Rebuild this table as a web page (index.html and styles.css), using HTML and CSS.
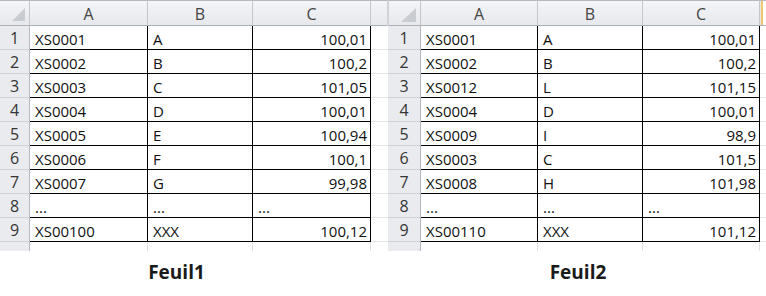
FILE: index.html
```html
<!DOCTYPE html>
<html lang="fr">
<head>
<meta charset="utf-8">
<title>Feuil1 / Feuil2</title>
<link rel="stylesheet" href="styles.css">
</head>
<body>
<div class="page">
  <div class="sheets">
    <div class="sheet sheet-left">
      <div class="corner"><svg class="tri" width="13" height="13" viewBox="0 0 13 13"><polygon points="13,0 13,13 0,13" fill="#c9ccd1"/></svg></div>
      <div class="colhdr">A</div><div class="colhdr">B</div><div class="colhdr">C</div><div class="colhdr hdr-part"></div>

      <div class="rowhdr">1</div><div class="cell">XS0001</div><div class="cell">A</div><div class="cell num">100,01</div><div class="blank"></div>
      <div class="rowhdr">2</div><div class="cell">XS0002</div><div class="cell">B</div><div class="cell num">100,2</div><div class="blank"></div>
      <div class="rowhdr">3</div><div class="cell">XS0003</div><div class="cell">C</div><div class="cell num">101,05</div><div class="blank"></div>
      <div class="rowhdr">4</div><div class="cell">XS0004</div><div class="cell">D</div><div class="cell num">100,01</div><div class="blank"></div>
      <div class="rowhdr">5</div><div class="cell">XS0005</div><div class="cell">E</div><div class="cell num">100,94</div><div class="blank"></div>
      <div class="rowhdr">6</div><div class="cell">XS0006</div><div class="cell">F</div><div class="cell num">100,1</div><div class="blank"></div>
      <div class="rowhdr">7</div><div class="cell">XS0007</div><div class="cell">G</div><div class="cell num">99,98</div><div class="blank"></div>
      <div class="rowhdr">8</div><div class="cell">...</div><div class="cell">...</div><div class="cell">...</div><div class="blank"></div>
      <div class="rowhdr">9</div><div class="cell">XS00100</div><div class="cell">XXX</div><div class="cell num">100,12</div><div class="blank"></div>

      <div class="rowhdr part"></div><div class="pcell"></div><div class="pcell"></div><div class="pcell"></div><div class="pblank"></div>
    </div>

    <div class="sheet sheet-right">
      <div class="corner corner-wide"><svg class="tri" width="15" height="14" viewBox="0 0 15 14"><polygon points="15,0 15,14 0,14" fill="#c9ccd1"/></svg></div>
      <div class="colhdr">A</div><div class="colhdr">B</div><div class="colhdr">C</div><div class="colhdr hdr-edge"></div>

      <div class="rowhdr">1</div><div class="cell">XS0001</div><div class="cell">A</div><div class="cell num">100,01</div><div class="blank"></div>
      <div class="rowhdr">2</div><div class="cell">XS0002</div><div class="cell">B</div><div class="cell num">100,2</div><div class="blank"></div>
      <div class="rowhdr">3</div><div class="cell">XS0012</div><div class="cell">L</div><div class="cell num">101,15</div><div class="blank"></div>
      <div class="rowhdr">4</div><div class="cell">XS0004</div><div class="cell">D</div><div class="cell num">100,01</div><div class="blank"></div>
      <div class="rowhdr">5</div><div class="cell">XS0009</div><div class="cell">I</div><div class="cell num">98,9</div><div class="blank"></div>
      <div class="rowhdr">6</div><div class="cell">XS0003</div><div class="cell">C</div><div class="cell num">101,5</div><div class="blank"></div>
      <div class="rowhdr">7</div><div class="cell">XS0008</div><div class="cell">H</div><div class="cell num">101,98</div><div class="blank"></div>
      <div class="rowhdr">8</div><div class="cell">...</div><div class="cell">...</div><div class="cell">...</div><div class="blank"></div>
      <div class="rowhdr">9</div><div class="cell">XS00110</div><div class="cell">XXX</div><div class="cell num">101,12</div><div class="blank"></div>

      <div class="rowhdr part"></div><div class="pcell"></div><div class="pcell"></div><div class="pcell"></div><div class="pblank"></div>
    </div>
  </div>

  <div class="captions">
    <div class="caption">Feuil1</div>
    <div class="caption">Feuil2</div>
  </div>
</div>
</body>
</html>
```

FILE: styles.css
```css
html, body {
  margin: 0;
  padding: 0;
  background: #ffffff;
}

body {
  width: 766px;
  height: 296px;
  overflow: hidden;
  font-family: "Open Sans", "Liberation Sans", sans-serif;
  font-size: 15px;
  color: #111111;
}

.page {
  display: flex;
  flex-direction: column;
}

.sheets {
  display: flex;
}

.sheet {
  display: grid;
  grid-template-rows: 26px repeat(9, 24px) 9px;
}

.sheet-left {
  grid-template-columns: 30px 118px 105px 118px 17px;
}

.sheet-right {
  grid-template-columns: 33px 117px 105px 117px 6px;
}

.sheet > div {
  box-sizing: border-box;
  overflow: hidden;
  white-space: nowrap;
}

/* headers */
.corner,
.colhdr {
  background: linear-gradient(#f4f5f7, #e6e8ec);
  border-top: 1px solid #b5b9bf;
  border-bottom: 1px solid #abb0b7;
  border-right: 1px solid #c3c7cd;
}

.corner {
  display: flex;
  align-items: flex-end;
  justify-content: flex-end;
  padding: 0 4px 4px 0;
}

.corner-wide {
  padding: 0 4px 3px 0;
  border-left: 1px solid #d0d3d8;
}

.tri {
  display: block;
}

.colhdr {
  display: flex;
  align-items: center;
  justify-content: center;
  color: #454545;
  font-size: 16px;
  line-height: 20px;
  padding-top: 1px;
}

.hdr-part {
  border-right: 1px solid #d0d3d8;
}

.hdr-edge {
  border-right: none;
  background: linear-gradient(90deg, #e6e8ec 0, #e6e8ec 1px, #f1c569 1px, #f1c569 3px, #ffffff 3px);
}

.rowhdr {
  background: #e9ebee;
  border-right: 1px solid #b4b9c0;
  border-bottom: 1px solid #cdd0d5;
  text-align: center;
  color: #353535;
  font-size: 16px;
  line-height: 20px;
  padding-top: 2px;
}

.rowhdr.part {
  border-bottom: none;
  padding-top: 0;
}

/* data cells */
.cell {
  border-right: 1px solid #000000;
  border-bottom: 1px solid #000000;
  line-height: 20px;
  padding: 3px 3px 0 5px;
  color: #111111;
}

.num {
  text-align: right;
}

.blank {
  border-bottom: 1px solid #e6e6e6;
}

.pcell {
  border-right: 1px solid #e0e0e0;
}

.pblank {
  background: #ffffff;
}

/* captions */
.captions {
  display: grid;
  grid-template-columns: 353px 376px;
  column-gap: 37px;
  padding-top: 8px;
}

.caption {
  text-align: center;
  font-weight: 700;
  font-size: 19px;
  line-height: 26px;
  color: #1a1a1a;
}
```
